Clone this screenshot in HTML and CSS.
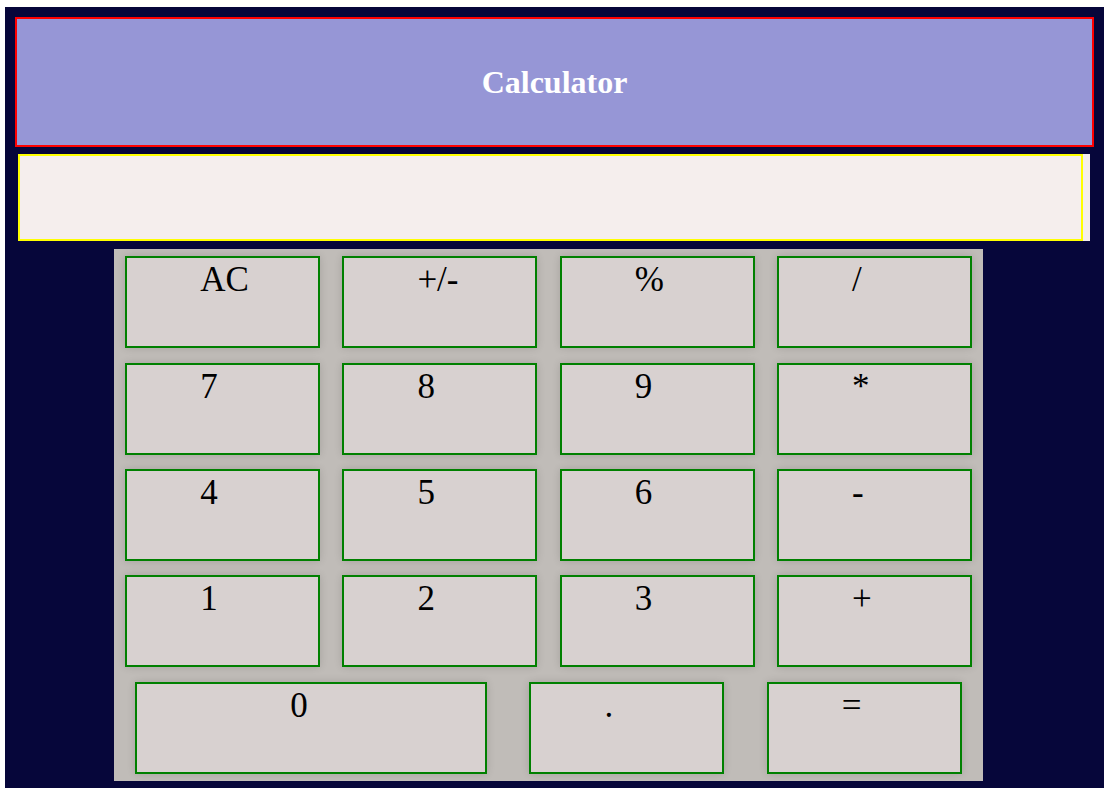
FILE: index.html
```html
<!DOCTYPE html>
<html lang="en">
<head>
<meta charset="utf-8">
<title>Calculator</title>
<link rel="stylesheet" href="styles.css">
</head>
<body>
<div class="page">
  <header class="title-bar"><h1 class="title">Calculator</h1></header>
  <div class="display-wrap"><div class="display"></div></div>
  <div class="keypad">
    <div class="row">
      <button class="key">AC</button>
      <button class="key">+/-</button>
      <button class="key">%</button>
      <button class="key">/</button>
    </div>
    <div class="row">
      <button class="key">7</button>
      <button class="key">8</button>
      <button class="key">9</button>
      <button class="key">*</button>
    </div>
    <div class="row">
      <button class="key">4</button>
      <button class="key">5</button>
      <button class="key">6</button>
      <button class="key">-</button>
    </div>
    <div class="row">
      <button class="key">1</button>
      <button class="key">2</button>
      <button class="key">3</button>
      <button class="key">+</button>
    </div>
    <div class="row">
      <button class="key key-zero">0</button>
      <button class="key">.</button>
      <button class="key">=</button>
    </div>
  </div>
</div>
</body>
</html>
```

FILE: styles.css
```css
html, body {
  margin: 0;
  padding: 0;
  background: #ffffff;
}

.page {
  margin: 7px 5px 5px 5px;
  padding: 10px 10px 7px 10px;
  background: #06063a;
  box-sizing: border-box;
  height: 781px;
}

.title-bar {
  height: 130px;
  box-sizing: border-box;
  border: 2px solid #ff0000;
  background: #9696d6;
  display: flex;
  align-items: center;
  justify-content: center;
}

.title {
  margin: 0;
  font-family: "Liberation Serif", "Times New Roman", serif;
  font-weight: bold;
  font-size: 32px;
  color: #ffffff;
}

.display-wrap {
  margin: 7px 0 0 3px;
  width: 1072px;
  height: 87px;
  background: #f5eeed;
}

.display {
  width: 1065px;
  height: 87px;
  box-sizing: border-box;
  border: 2px solid #ffff00;
  background: #f5eeed;
}

.keypad {
  margin: 8px 0 0 99px;
  width: 869px;
  height: 532px;
  background: #c0bcb8;
  display: grid;
  grid-template-rows: repeat(5, 1fr);
  align-items: center;
}

.row {
  display: flex;
  justify-content: space-around;
  align-items: center;
}

.key {
  width: 195px;
  height: 92px;
  box-sizing: border-box;
  border: 2px solid #008000;
  background: #d8d1d0;
  box-shadow: 0 0 8px rgba(0, 0, 0, 0.14);
  font-family: "Liberation Serif", "Times New Roman", serif;
  font-size: 35px;
  line-height: 40px;
  color: #000000;
  text-align: left;
  padding: 2px 0 0 73px;
  display: flex;
  align-items: flex-start;
  margin: 0;
}

.key-zero {
  width: 352px;
  padding-left: 153px;
}
```
